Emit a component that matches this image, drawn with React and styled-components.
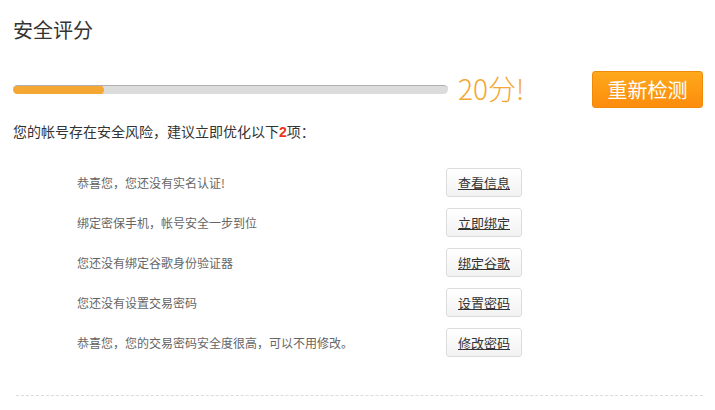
import React from "react";
import styled, { createGlobalStyle } from "styled-components";

const Global = createGlobalStyle`
  html, body { margin: 0; padding: 0; background: #fff; }
  body { font-family: "Noto Sans CJK SC", "Noto Sans", sans-serif; color: #333; }
`;

const Page = styled.div`
  width: 690px;
  padding: 17px 12px 0 13px;
`;

const Title = styled.h1`
  margin: 0;
  font-size: 20px;
  line-height: 26px;
  font-weight: 400;
  color: #333;
`;

const ScoreRow = styled.div`
  display: flex;
  align-items: center;
  height: 37px;
  margin-top: 28px;
`;

const Track = styled.div`
  width: 435px;
  height: 9px;
  box-sizing: border-box;
  background: #dcdcdc;
  border-top: 1px solid #b0b0b0;
  border-radius: 5px;
  overflow: hidden;
`;

const Fill = styled.div`
  height: 10px;
  margin-top: -1px;
  background: #f5a733;
  border-radius: 5px;
`;

const Score = styled.span`
  margin-left: 10px;
  font-size: 28px;
  line-height: 1;
  font-weight: 300;
  color: #f5a733;
  margin-top: -3px;
`;

const CheckButton = styled.button`
  margin-left: auto;
  width: 111px;
  height: 37px;
  border: 1px solid #f08a0b;
  border-radius: 3px;
  background: linear-gradient(#fea91c, #fd8c0c);
  color: #fff;
  font-family: inherit;
  font-size: 20px;
  padding: 0;
  cursor: pointer;
`;

const Notice = styled.p`
  margin: 13px 0 0;
  font-size: 14px;
  line-height: 20px;
  color: #333;
`;

const Count = styled.b`
  color: #e8341c;
  font-family: "Liberation Sans", sans-serif;
`;

const List = styled.ul`
  list-style: none;
  margin: 26px 0 0;
  padding: 0 0 0 64px;
  display: flex;
  flex-direction: column;
  gap: 11px;
`;

const Row = styled.li`
  display: flex;
  align-items: center;
  height: 29px;
`;

const RowText = styled.span`
  width: 369px;
  font-size: 12px;
  color: #666;
`;

const ActionButton = styled.button`
  width: 76px;
  height: 29px;
  box-sizing: border-box;
  border: 1px solid #dcdcdc;
  border-radius: 3px;
  background: linear-gradient(#ffffff, #f2f2f2);
  font-family: inherit;
  font-size: 13px;
  color: #333;
  text-decoration: underline;
  padding: 0;
  cursor: pointer;
`;

const Divider = styled.hr`
  margin: 38px 0 0 3px;
  border: 0;
  border-top: 1px dashed #dcdcdc;
  height: 0;
`;

const items = [
  ["恭喜您，您还没有实名认证!", "查看信息"],
  ["绑定密保手机，帐号安全一步到位", "立即绑定"],
  ["您还没有绑定谷歌身份验证器", "绑定谷歌"],
  ["您还没有设置交易密码", "设置密码"],
  ["恭喜您，您的交易密码安全度很高，可以不用修改。", "修改密码"],
];

export default function App() {
  const score = 20;
  return (
    <>
      <Global />
      <Page>
        <Title>安全评分</Title>
        <ScoreRow>
          <Track>
            <Fill style={{ width: `${(91 / 435) * 100}%` }} />
          </Track>
          <Score>{score}分!</Score>
          <CheckButton>重新检测</CheckButton>
        </ScoreRow>
        <Notice>
          您的帐号存在安全风险，建议立即优化以下<Count>2</Count>项：
        </Notice>
        <List>
          {items.map(([t, b]) => (
            <Row key={b}>
              <RowText>{t}</RowText>
              <ActionButton>{b}</ActionButton>
            </Row>
          ))}
        </List>
        <Divider />
      </Page>
    </>
  );
}
